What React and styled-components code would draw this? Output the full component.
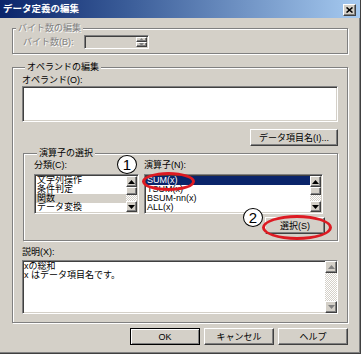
import React from 'react';
import styled, { createGlobalStyle, css } from 'styled-components';

const GlobalStyle = createGlobalStyle`
  html, body {
    margin: 0;
    padding: 0;
    background: #d4d0c8;
  }
  body {
    font-family: "Liberation Sans", "Noto Sans CJK JP", sans-serif;
    font-size: 9px;
    color: #000;
  }
`;

const raised = css`
  background: #d4d0c8;
  border: 1px solid;
  border-color: #fff #404040 #404040 #fff;
  box-shadow: inset -1px -1px 0 #808080;
`;

const sunken = css`
  border: 1px solid;
  border-color: #808080 #fff #fff #808080;
  box-shadow: inset 1px 1px 0 #404040, inset -1px -1px 0 #d4d0c8;
`;

const Window = styled.div`
  position: relative;
  width: 361px;
  height: 354px;
  box-sizing: border-box;
  background: #d4d0c8;
  display: flex;
  flex-direction: column;
  border-right: 1px solid #404040;
  border-bottom: 1px solid #404040;
  box-shadow: inset -1px -1px 0 #808080;
  overflow: hidden;
`;

const TitleBar = styled.div`
  height: 18px;
  flex: none;
  display: flex;
  align-items: center;
  justify-content: space-between;
  padding: 0 4px 0 3px;
  background: linear-gradient(to right, #0a246a 0%, #3a5c98 35%, #a6caf0 100%);
`;

const Title = styled.span`
  color: #fff;
  font-weight: bold;
  font-size: 9.5px;
  line-height: 12px;
`;

const CloseButton = styled.div`
  ${raised};
  width: 13px;
  height: 12px;
  box-sizing: border-box;
  display: flex;
  align-items: center;
  justify-content: center;
  margin-top: 1px;
`;

const Body = styled.div`
  flex: 1;
  display: flex;
  flex-direction: column;
  padding: 4px 12px 0 12px;
`;

const GroupBox = styled.fieldset`
  margin: ${p => p.$mt || 0}px 0 0 ${p => p.$ml || 0}px;
  padding: ${p => p.$pad};
  min-width: 0;
  border: 1px solid #808080;
  box-shadow: inset 1px 1px 0 #fff, 1px 1px 0 #fff;
  display: flex;
  flex-direction: column;
`;

const Legend = styled.legend`
  margin-left: 3px;
  padding: 0 2px;
  font-size: 9px;
  line-height: 12px;
  background: #d4d0c8;
  color: ${p => (p.$disabled ? '#808080' : '#000')};
  text-shadow: ${p => (p.$disabled ? '1px 1px 0 #fff' : 'none')};
`;

const Label = styled.div`
  line-height: 12px;
  margin-top: ${p => p.$mt || 0}px;
  width: ${p => (p.$w ? `${p.$w}px` : 'auto')};
  flex: none;
  color: ${p => (p.$disabled ? '#808080' : '#000')};
  text-shadow: ${p => (p.$disabled ? '1px 1px 0 #fff' : 'none')};
`;

const FieldRow = styled.div`
  display: flex;
  align-items: center;
  margin-top: 1px;
  padding-left: 10px;
`;

const SpinInput = styled.div`
  ${sunken};
  width: 65px;
  height: 14px;
  box-sizing: border-box;
  background: #d4d0c8;
  display: flex;
  justify-content: flex-end;
  padding: 1px;
`;

const SpinColumn = styled.div`
  width: 11px;
  display: flex;
  flex-direction: column;
`;

const SpinButton = styled.div`
  ${raised};
  flex: 1;
  box-sizing: border-box;
  display: flex;
  align-items: center;
  justify-content: center;
`;

const TextBox = styled.div`
  ${sunken};
  height: ${p => p.$h}px;
  margin-top: ${p => p.$mt || 0}px;
  box-sizing: border-box;
  background: #fff;
  display: flex;
`;

const ButtonRow = styled.div`
  display: flex;
  justify-content: flex-end;
  gap: 4px;
  margin-top: ${p => p.$mt || 0}px;
  padding-right: ${p => p.$pr || 0}px;
`;

const Button = styled.div`
  ${raised};
  width: ${p => p.$w}px;
  height: 17px;
  box-sizing: border-box;
  display: flex;
  align-items: center;
  justify-content: center;
  line-height: 12px;
  ${p =>
    p.$default &&
    css`
      border: 1px solid #000;
      box-shadow: inset 1px 1px 0 #fff, inset -1px -1px 0 #808080;
    `}
`;

const Columns = styled.div`
  display: flex;
  gap: 5px;
`;

const Column = styled.div`
  width: ${p => p.$w}px;
  display: flex;
  flex-direction: column;
`;

const ListBox = styled.div`
  ${sunken};
  height: 40px;
  margin-top: 3px;
  box-sizing: border-box;
  background: #fff;
  display: flex;
  padding: 1px;
`;

const Items = styled.div`
  flex: 1;
  display: flex;
  flex-direction: column;
  overflow: hidden;
`;

const Item = styled.div`
  line-height: 9px;
  height: 9px;
  padding-left: 1px;
  white-space: nowrap;
  background: ${p => (p.$sel === 'active' ? '#0a246a' : p.$sel === 'inactive' ? '#d4d0c8' : 'transparent')};
  color: ${p => (p.$sel === 'active' ? '#fff' : '#000')};
`;

const ScrollBar = styled.div`
  width: ${p => p.$w}px;
  flex: none;
  display: flex;
  flex-direction: column;
`;

const ScrollButton = styled.div`
  ${raised};
  height: ${p => p.$h}px;
  box-sizing: border-box;
  flex: none;
  display: flex;
  align-items: center;
  justify-content: center;
`;

const Track = styled.div`
  flex: 1;
  display: flex;
  flex-direction: column;
  background-color: #fff;
  background-image: repeating-conic-gradient(#d4d0c8 0 25%, #fff 0 50%);
  background-size: 2px 2px;
`;

const Thumb = styled.div`
  ${raised};
  height: 8px;
  box-sizing: border-box;
`;

const DescText = styled.div`
  flex: 1;
  padding: 1px 1px;
  line-height: 9px;
`;

const Marker = styled.div`
  position: absolute;
  left: ${p => p.$x}px;
  top: ${p => p.$y}px;
  width: ${p => p.$w}px;
  height: ${p => p.$h}px;
  box-sizing: border-box;
  border: 3px solid #dd1a22;
  border-radius: 50%;
`;

const Badge = styled.div`
  position: absolute;
  left: ${p => p.$x}px;
  top: ${p => p.$y}px;
  width: 20px;
  height: 19px;
  box-sizing: border-box;
  border: 1px solid #000;
  border-radius: 50%;
  background: #fff;
  display: flex;
  align-items: center;
  justify-content: center;
  font-family: "Liberation Sans", sans-serif;
  font-size: 15px;
  line-height: 15px;
`;

const Arrow = ({ dir, color = '#000' }) => (
  <svg width="7" height="4" viewBox="0 0 7 4">
    {dir === 'up' ? (
      <polygon points="3.5,0 7,4 0,4" fill={color} />
    ) : (
      <polygon points="0,0 7,0 3.5,4" fill={color} />
    )}
  </svg>
);

const SmallArrow = ({ dir }) => (
  <svg width="5" height="3" viewBox="0 0 5 3">
    {dir === 'up' ? (
      <polygon points="2.5,0 5,3 0,3" fill="#808080" />
    ) : (
      <polygon points="0,0 5,0 2.5,3" fill="#808080" />
    )}
  </svg>
);

const ListScroll = () => (
  <ScrollBar $w={11}>
    <ScrollButton $h={11}>
      <Arrow dir="up" />
    </ScrollButton>
    <Track>
      <Thumb />
    </Track>
    <ScrollButton $h={11}>
      <Arrow dir="down" />
    </ScrollButton>
  </ScrollBar>
);

const categories = ['文字列操作', '条件判定', '関数', 'データ変換'];
const operators = ['SUM(x)', 'TSUM(x)', 'BSUM-nn(x)', 'ALL(x)'];

export default function App() {
  return (
    <>
      <GlobalStyle />
      <Window>
        <TitleBar>
          <Title>データ定義の編集</Title>
          <CloseButton>
            <svg width="7" height="6" viewBox="0 0 7 6">
              <path d="M0.5 0.5 L6.5 5.5 M6.5 0.5 L0.5 5.5" stroke="#000" strokeWidth="1.6" />
            </svg>
          </CloseButton>
        </TitleBar>
        <Body>
          <GroupBox $pad="0 0 4px 0">
            <Legend $disabled>バイト数の編集</Legend>
            <FieldRow>
              <Label $w={61} $disabled>
                バイト数(B):
              </Label>
              <SpinInput>
                <SpinColumn>
                  <SpinButton>
                    <SmallArrow dir="up" />
                  </SpinButton>
                  <SpinButton>
                    <SmallArrow dir="down" />
                  </SpinButton>
                </SpinColumn>
              </SpinInput>
            </FieldRow>
          </GroupBox>

          <GroupBox $mt={7} $pad="0 9px 8px 9px">
            <Legend>オペランドの編集</Legend>
            <Label $mt={1}>オペランド(O):</Label>
            <TextBox $h={36} />
            <ButtonRow $mt={7}>
              <Button $w={88}>データ項目名(I)...</Button>
            </ButtonRow>

            <GroupBox $mt={1} $ml={1} $pad="0 12px 6px 10px">
              <Legend>演算子の選択</Legend>
              <Columns>
                <Column $w={105}>
                  <Label>分類(C):</Label>
                  <ListBox>
                    <Items>
                      {categories.map(c => (
                        <Item key={c} $sel={c === '関数' ? 'inactive' : ''}>
                          {c}
                        </Item>
                      ))}
                    </Items>
                    <ListScroll />
                  </ListBox>
                </Column>
                <Column $w={179}>
                  <Label>演算子(N):</Label>
                  <ListBox>
                    <Items>
                      {operators.map(o => (
                        <Item key={o} $sel={o === 'SUM(x)' ? 'active' : ''}>
                          {o}
                        </Item>
                      ))}
                    </Items>
                    <ListScroll />
                  </ListBox>
                </Column>
              </Columns>
              <ButtonRow $mt={3}>
                <Button $w={60}>選択(S)</Button>
              </ButtonRow>
            </GroupBox>

            <Label $mt={5}>説明(X):</Label>
            <TextBox $h={54} $mt={2}>
              <DescText>
                xの総和
                <br />x はデータ項目名です。
              </DescText>
              <ScrollBar $w={12}>
                <ScrollButton $h={12}>
                  <Arrow dir="up" color="#808080" />
                </ScrollButton>
                <Track />
                <ScrollButton $h={12}>
                  <Arrow dir="down" color="#808080" />
                </ScrollButton>
              </ScrollBar>
            </TextBox>
          </GroupBox>

          <ButtonRow $mt={5}>
            <Button $w={70} $default>
              OK
            </Button>
            <Button $w={70}>キャンセル</Button>
            <Button $w={70}>ヘルプ</Button>
          </ButtonRow>
        </Body>

        <Marker $x={142} $y={172} $w={53} $h={19} />
        <Marker $x={262} $y={215} $w={70} $h={25} />
        <Badge $x={117} $y={155}>1</Badge>
        <Badge $x={243} $y={208}>2</Badge>
      </Window>
    </>
  );
}
